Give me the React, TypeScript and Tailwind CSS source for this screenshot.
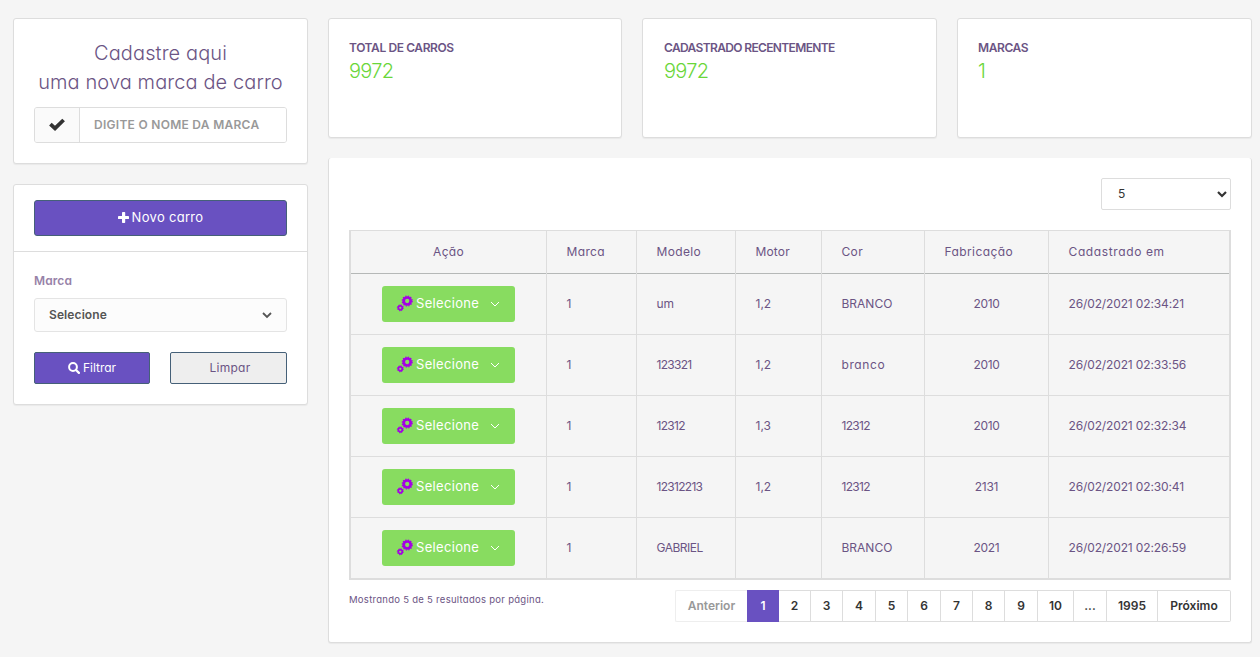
import type { ReactNode } from "react";
import clsx from "clsx";

const columns = [
  { name: "Ação", tracking: "tracking-[0.3px]" },
  { name: "Marca", tracking: "tracking-[0.35px]" },
  { name: "Modelo", tracking: "tracking-[0.35px]" },
  { name: "Motor", tracking: "tracking-[0.15px]" },
  { name: "Cor", tracking: "tracking-[0.35px]" },
  { name: "Fabricação", tracking: "tracking-[0.4px]" },
  { name: "Cadastrado em", tracking: "tracking-[0.62px]" },
];

const cars = [
  ["1", "um", "1,2", "BRANCO", "2010", "26/02/2021 02:34:21"],
  ["1", "123321", "1,2", "branco", "2010", "26/02/2021 02:33:56"],
  ["1", "12312", "1,3", "12312", "2010", "26/02/2021 02:32:34"],
  ["1", "12312213", "1,2", "12312", "2131", "26/02/2021 02:30:41"],
  ["1", "GABRIEL", "", "BRANCO", "2021", "26/02/2021 02:26:59"],
];

const pages = [
  { label: "2", width: "w-[32px]" },
  { label: "3", width: "w-[32px]" },
  { label: "4", width: "w-[33px]" },
  { label: "5", width: "w-[32px]" },
  { label: "6", width: "w-[33px]" },
  { label: "7", width: "w-[32px]" },
  { label: "8", width: "w-[32px]" },
  { label: "9", width: "w-[33px]" },
  { label: "10", width: "w-[36px]" },
  { label: "...", width: "w-[33px]" },
  { label: "1995", width: "w-[51px]" },
  { label: "Próximo", width: "w-[73px] rounded-r-[2px]" },
];

function cellTracking(value: string) {
  if (/^\d{5,}$/.test(value)) return "tracking-[-0.7px]";
  if (value.includes("/")) return "tracking-[-0.13px]";
  if (value === "branco") return "tracking-[0.6px]";
  if (value === "GABRIEL") return "tracking-[-0.5px]";
  if (/^\d{4}$/.test(value)) return "tracking-[-0.3px]";
  return "";
}

function Card({ className, children }: { className?: string; children: ReactNode }) {
  return (
    <section className={clsx("rounded-[3px] border border-[#ddd] bg-white shadow-[0_1px_1px_rgba(0,0,0,0.05)]", className)}>
      {children}
    </section>
  );
}

function CheckIcon() {
  return (
    <svg className="-mt-px" width="16" height="13" viewBox="0 0 16 13" fill="none" stroke="#333" strokeWidth="3.8">
      <path d="M1.4 6.2 6 10.4 14.6 2" />
    </svg>
  );
}

function PlusIcon() {
  return (
    <svg className="-mt-px" width="11" height="11" viewBox="0 0 11 11" fill="#fff">
      <rect x="4" y="0" width="3.2" height="11" rx="0.7" />
      <rect x="0" y="3.9" width="11" height="3.2" rx="0.7" />
    </svg>
  );
}

function SearchIcon() {
  return (
    <svg width="12" height="12" viewBox="0 0 12 12" fill="none" stroke="#fff">
      <circle cx="5" cy="5" r="3.9" strokeWidth="2" />
      <path d="m8 8 2.9 2.9" strokeWidth="2.2" strokeLinecap="round" />
    </svg>
  );
}

function GearsIcon() {
  return (
    <svg className="-mt-px" width="17" height="17" viewBox="0 0 17 17" fill="none" stroke="#a400e4">
      <circle cx="11.2" cy="6" r="3.5" strokeWidth="2.7" />
      <circle cx="11.2" cy="6" r="5" strokeWidth="1.2" strokeDasharray="1.309 1.309" />
      <circle cx="4.3" cy="12.8" r="2" strokeWidth="1.7" />
      <circle cx="4.3" cy="12.8" r="3" strokeWidth="1" strokeDasharray="1.178 1.178" />
    </svg>
  );
}

function Chevron({ className, thickness, color }: { className?: string; thickness: number; color: string }) {
  return (
    <svg className={className} width="10" height="8" viewBox="0 0 10 8" fill="none" stroke={color} strokeWidth={thickness}>
      <path d="m1 2 4 4 4-4" />
    </svg>
  );
}

function Stat({ title, value, tight }: { title: string; value: string; tight?: boolean }) {
  return (
    <Card className="h-[120px] px-5 pt-[19px]">
      <h2
        className={clsx(
          "text-[12px] leading-[20px] font-semibold",
          tight ? "tracking-[-0.64px] pl-px" : "tracking-[-0.4px]",
        )}
      >
        {title}
      </h2>
      <p className={clsx("text-[20px] leading-[26px] font-light tracking-[-0.7px] text-[#6ad63a]", tight && "pl-px")}>
        {value}
      </p>
    </Card>
  );
}

function Sidebar() {
  return (
    <aside className="flex w-[295px] shrink-0 flex-col gap-5">
      <Card className="h-[146px] px-5 pt-5">
        <h1 className="-mx-2 text-center text-[20px] leading-[29px] font-[350] tracking-[0.1px] whitespace-nowrap">
          Cadastre aqui
          <br />
          uma nova marca de carro
        </h1>
        <div className="mt-[10px] flex h-9 overflow-hidden rounded-[3px] border border-[#ddd]">
          <span className="flex w-[45px] items-center justify-center border-r border-[#ddd] bg-[#fafafa]">
            <CheckIcon />
          </span>
          <input
            className="min-w-0 flex-1 bg-white px-[14px] text-[12px] font-semibold tracking-[0.28px] outline-none placeholder:text-[#999]"
            placeholder="DIGITE O NOME DA MARCA"
          />
        </div>
      </Card>
      <Card className="h-[221px]">
        <div className="h-[67px] border-b border-[#ddd] px-5 pt-[15px]">
          <button className="flex h-9 w-full items-center justify-center gap-[3px] rounded-[3px] border border-[#456078] bg-[#6951c1] text-[13px] text-white">
            <PlusIcon />
            <span className="tracking-[0.3px]">Novo carro</span>
          </button>
        </div>
        <div className="px-5 pt-[19px]">
          <div className="text-[12px] leading-5 font-semibold tracking-[0.1px] text-[#9782a8]">Marca</div>
          <div className="mt-[7px] flex h-[34px] items-center justify-between rounded-[3px] border border-[#e4e4e4] bg-[#fcfcfc] pr-[14px] pl-[14px] text-[12px] font-semibold tracking-[0.1px] text-[#555]">
            <span>Selecione</span>
            <Chevron thickness={1.8} color="#555" />
          </div>
          <div className="mt-5 grid grid-cols-[116px_117px] gap-5 text-[12px]">
            <button className="flex h-8 items-center justify-center gap-[3px] rounded-[2px] border border-[#456078] bg-[#6951c1] text-white">
              <SearchIcon />
              <span>Filtrar</span>
            </button>
            <button className="h-8 rounded-[2px] border border-[#456078] bg-[#eee] pl-[3px] tracking-[0.25px]">Limpar</button>
          </div>
        </div>
      </Card>
    </aside>
  );
}

function CarTable() {
  const row = "grid grid-cols-[196px_90px_99px_86px_103px_124px_180px]";
  return (
    <div className="border-2 border-t border-[#ddd] bg-[#f5f5f5] text-[12px]">
      <div className={row}>
        {columns.map(({ name, tracking }, i) => (
          <div key={name} className={clsx("flex h-[43px] border-[#ddd]", i < 6 && "border-r")}>
            <div
              className={clsx(
                "flex flex-1 items-center border-b border-[#b5b8b7]",
                i === 0 ? "justify-center" : "pl-[19.5px]",
                tracking,
              )}
            >
              {name}
            </div>
          </div>
        ))}
      </div>
      {cars.map((car, r) => (
        <div key={car[5]} className={clsx(row, r < 4 && "border-b border-[#ddd]")}>
          <div className="flex h-[60px] items-center justify-center border-r border-[#ddd]">
            <button className="flex h-9 w-[133px] items-center rounded-[3px] bg-[#88dc60] pl-[14px] text-[13px] text-white">
              <GearsIcon />
              <span className="ml-[3px] w-[64px] text-left tracking-[0.33px]">Selecione</span>
              <Chevron className="ml-[10px]" thickness={1} color="#fff" />
            </button>
          </div>
          {car.map((value, c) => (
            <div
              key={c}
              className={clsx(
                "flex items-center border-[#ddd]",
                c < 5 && "border-r",
                c === 4 ? "justify-center" : "pl-[19.5px]",
                cellTracking(value),
              )}
            >
              {value}
            </div>
          ))}
        </div>
      ))}
    </div>
  );
}

function Pagination() {
  return (
    <nav className="flex h-8 text-[12px] font-semibold text-[#333]">
      <span className="flex w-[72px] items-center justify-center rounded-l-[2px] border border-r-0 border-[#eee] text-[#999]">
        Anterior
      </span>
      <span className="flex w-8 items-center justify-center bg-[#6951c1] text-white">1</span>
      {pages.map((page) => (
        <span
          key={page.label}
          className={clsx("flex items-center justify-center border-y border-r border-[#ddd]", page.width)}
        >
          {page.label}
        </span>
      ))}
    </nav>
  );
}

export default function App() {
  return (
    <div className="flex h-[657px] w-[1260px] gap-5 overflow-hidden bg-[#f5f5f5] pt-[18px] pl-[13px] font-['Inter',sans-serif] text-[#6b5484] [font-feature-settings:'cv11']">
      <Sidebar />
      <main className="w-[924px]">
        <div className="grid grid-cols-[294px_295px_295px] gap-5">
          <Stat title="TOTAL DE CARROS" value="9972" />
          <Stat title="CADASTRADO RECENTEMENTE" value="9972" tight />
          <Stat title="MARCAS" value="1" />
        </div>
        <Card className="mt-5 h-[485px] border-t-0 px-5 pt-5">
          <div className="mb-5 flex justify-end">
            <div className="flex h-8 w-[130px] items-center justify-between rounded-[2px] border border-[#ddd] pr-[3px] pl-4 text-[12px] text-[#333]">
              <span>5</span>
              <Chevron thickness={2.2} color="#333" />
            </div>
          </div>
          <CarTable />
          <div className="mt-[10px] flex justify-between">
            <p className="text-[9.5px] leading-5 tracking-[0.28px]">Mostrando 5 de 5 resultados por página.</p>
            <Pagination />
          </div>
        </Card>
      </main>
    </div>
  );
}
